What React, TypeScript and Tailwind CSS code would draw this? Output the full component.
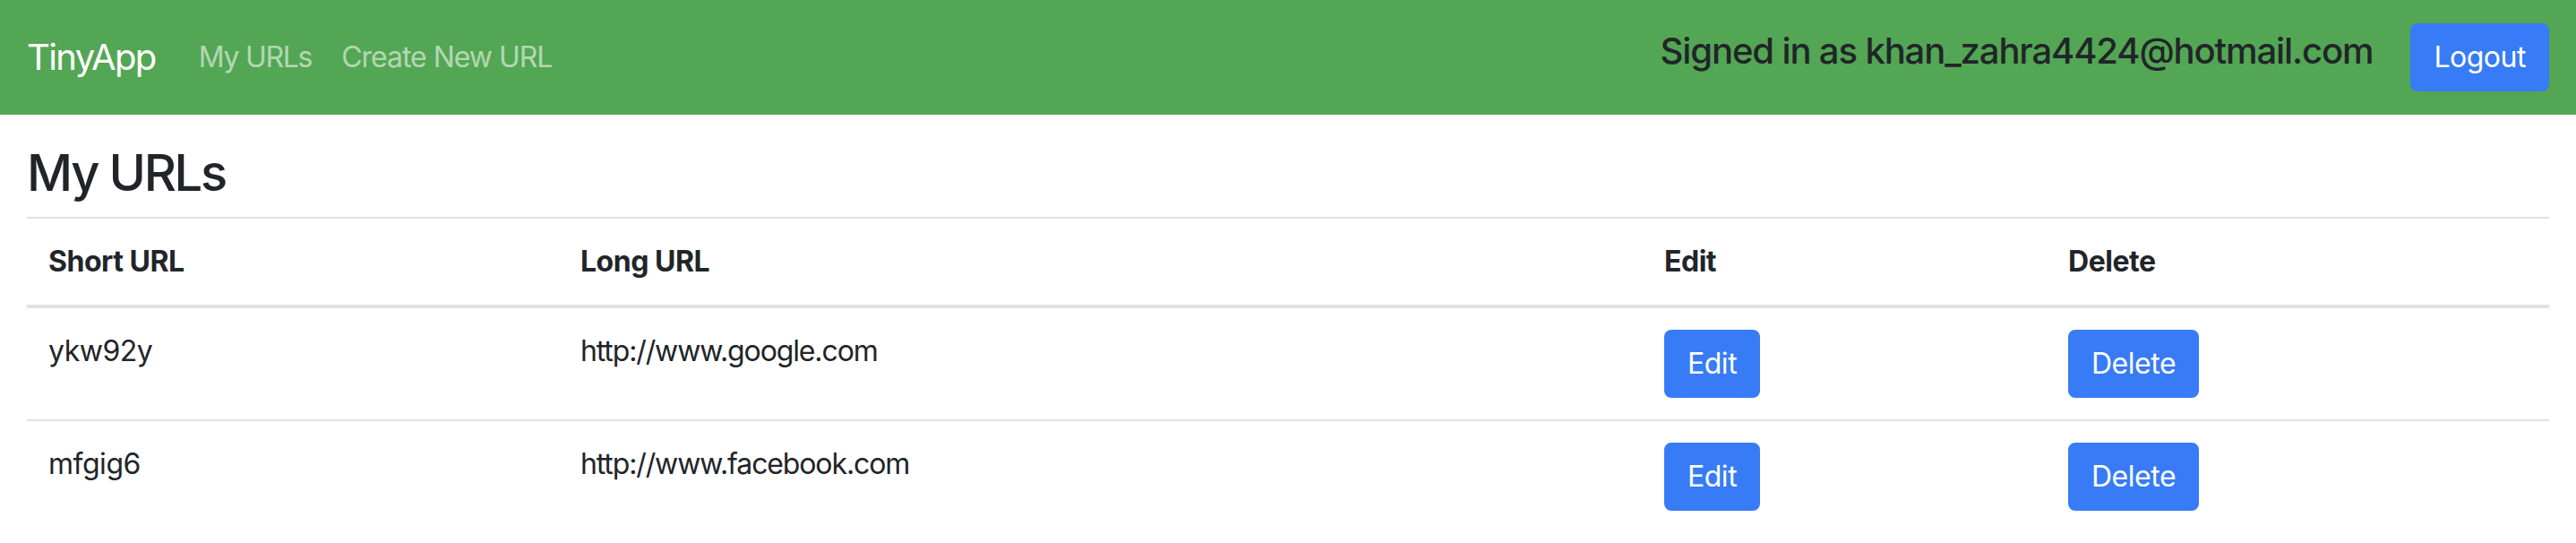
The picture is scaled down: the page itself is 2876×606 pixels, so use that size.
import React from "react";

const rows = [
  { short: "ykw92y", long: "http://www.google.com" },
  { short: "mfgig6", long: "http://www.facebook.com" },
];

export default function App() {
  return (
    <div
      className="min-h-[606px] bg-white text-[#212529] tracking-[-0.03em]"
      style={{ fontFamily: "Inter, 'Noto Sans', 'Liberation Sans', sans-serif" }}
    >
      <nav className="h-[128px] bg-[#53a653] flex items-center justify-between px-[30px]">
        <div className="flex items-center">
          <a className="text-[40px] leading-[60px] text-white mr-[48px] tracking-[-0.04em]">TinyApp</a>
          <a className="text-[32px] leading-[48px] text-white/55 pr-[17px] tracking-[-0.04em]">My URLs</a>
          <a className="text-[32px] leading-[48px] text-white/55 px-[16px] tracking-[-0.032em]">Create New URL</a>
        </div>
        <div className="flex items-center">
          <h5 className="text-[40px] leading-[48px] font-medium mb-[14px] text-[#212529] tracking-[-0.028em]">
            Signed in as khan_zahra4424@hotmail.com
          </h5>
          <button className="ml-[42px] h-[76px] px-[24px] rounded-[8px] bg-[#377bf6] border-2 border-[#377bf6] text-white text-[32px] leading-[48px]">
            Logout
          </button>
        </div>
      </nav>
      <main className="px-[30px] pt-[32px]">
        <h3 className="text-[56px] leading-[67px] font-medium mb-[15px] tracking-[-0.042em]">My URLs</h3>
        <table className="w-full table-fixed border-separate border-spacing-0 text-[32px] leading-[48px]">
          <colgroup>
            <col className="w-[594px]" />
            <col className="w-[1210px]" />
            <col className="w-[451px]" />
            <col className="w-[561px]" />
          </colgroup>
          <thead>
            <tr>
              {["Short URL", "Long URL", "Edit", "Delete"].map((h) => (
                <th
                  key={h}
                  className="text-left font-bold p-[24px] border-t-2 border-b-4 border-[#dee2e6] align-bottom tracking-[-0.015em]"
                >
                  {h}
                </th>
              ))}
            </tr>
          </thead>
          <tbody>
            {rows.map((r, i) => {
              const b = i > 0 ? "border-t-2 border-[#dee2e6]" : "";
              return (
                <tr key={r.short}>
                  <td className={`p-[24px] align-top ${b}`}>{r.short}</td>
                  <td className={`p-[24px] align-top tracking-[-0.035em] ${b}`}>{r.long}</td>
                  <td className={`p-[24px] align-top ${b}`}>
                    <button className="h-[76px] px-[24px] rounded-[8px] bg-[#377bf6] border-2 border-[#377bf6] text-white text-[32px] leading-[48px]">
                      Edit
                    </button>
                  </td>
                  <td className={`p-[24px] align-top ${b}`}>
                    <button className="h-[76px] px-[24px] rounded-[8px] bg-[#377bf6] border-2 border-[#377bf6] text-white text-[32px] leading-[48px]">
                      Delete
                    </button>
                  </td>
                </tr>
              );
            })}
          </tbody>
        </table>
      </main>
    </div>
  );
}
